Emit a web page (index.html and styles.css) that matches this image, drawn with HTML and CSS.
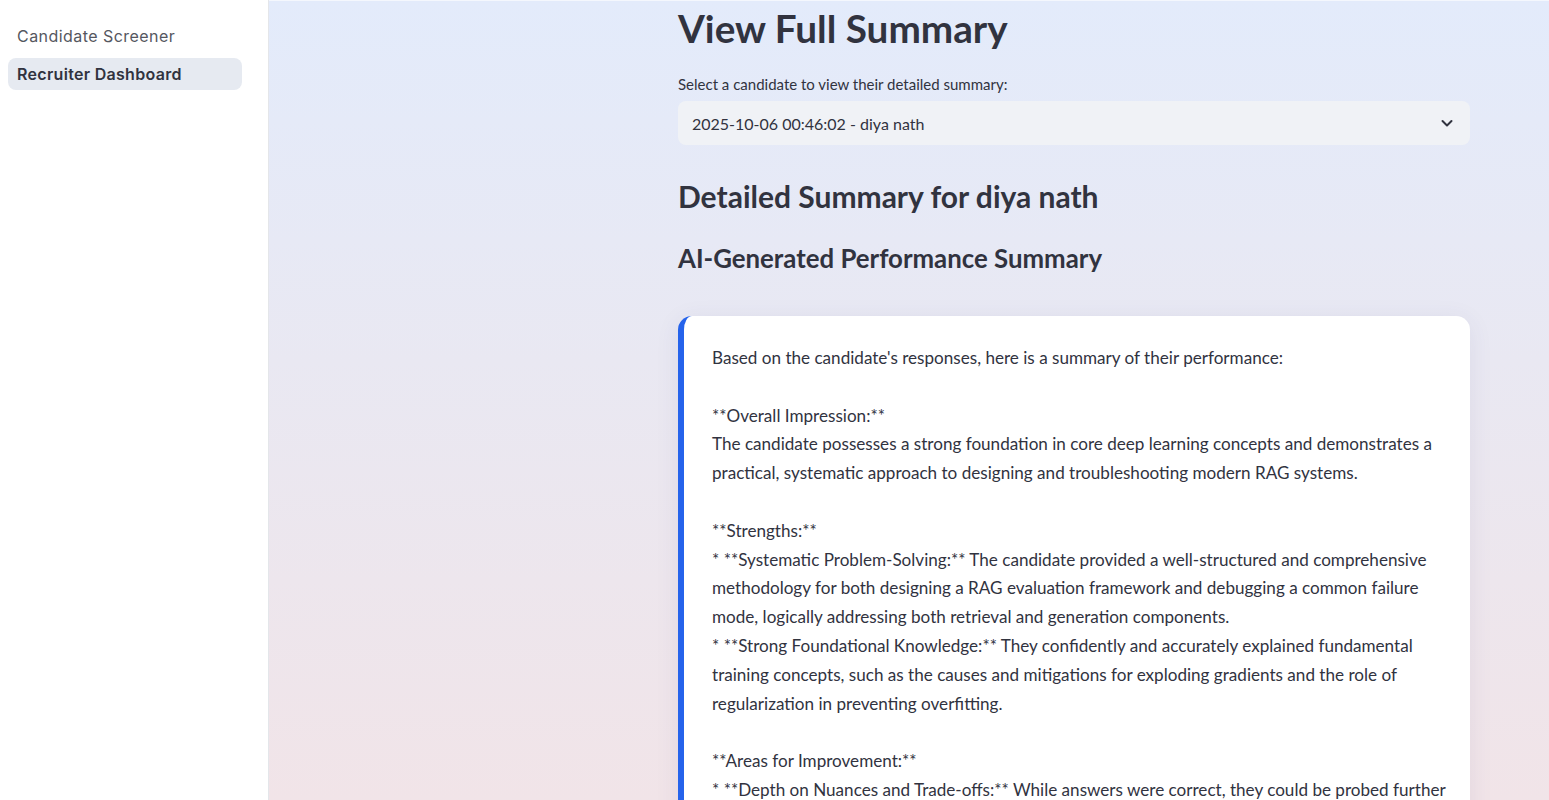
FILE: index.html
```html
<!DOCTYPE html>
<html lang="en">
<head>
<meta charset="utf-8">
<title>Recruiter Dashboard</title>
<link rel="stylesheet" href="styles.css">
</head>
<body>
<div class="app">
  <aside class="sidebar">
    <nav class="nav">
      <a class="nav-item">Candidate Screener</a>
      <a class="nav-item active">Recruiter Dashboard</a>
    </nav>
  </aside>
  <main class="main">
    <div class="columns">
      <div class="col-spacer"></div>
      <div class="col-content">
        <h1 class="title">View Full Summary</h1>
        <label class="field-label">Select a candidate to view their detailed summary:</label>
        <div class="select">
          <span class="select-value">2025-10-06 00:46:02 - diya nath</span>
          <svg class="chevron" width="14" height="14" viewBox="0 0 14 14"><path d="M2.5 5 L7 9.5 L11.5 5" fill="none" stroke="#31333f" stroke-width="2" stroke-linecap="round" stroke-linejoin="round"/></svg>
        </div>
        <h2 class="subtitle">Detailed Summary for diya nath</h2>
        <h3 class="section-title">AI-Generated Performance Summary</h3>
        <div class="summary-card"><p class="summary-text">Based on the candidate's responses, here is a summary of their performance:

**Overall Impression:**
The candidate possesses a strong foundation in core deep learning concepts and demonstrates a practical, systematic approach to designing and troubleshooting modern RAG systems.

**Strengths:**
* **Systematic Problem-Solving:** The candidate provided a well-structured and comprehensive methodology for both designing a RAG evaluation framework and debugging a common failure mode, logically addressing both retrieval and generation components.
* **Strong Foundational Knowledge:** They confidently and accurately explained fundamental training concepts, such as the causes and mitigations for exploding gradients and the role of regularization in preventing overfitting.

**Areas for Improvement:**
* **Depth on Nuances and Trade-offs:** While answers were correct, they could be probed further</p></div>
      </div>
    </div>
  </main>
</div>
</body>
</html>
```
FILE: styles.css
```css
* { box-sizing: border-box; }
html, body { margin: 0; padding: 0; height: 100%; }
body {
  font-family: "Lato", "Open Sans", sans-serif;
  color: #31333f;
  background: #ffffff;
}
.app {
  display: flex;
  height: 100vh;
  overflow: hidden;
}
.sidebar {
  width: 269px;
  flex: 0 0 269px;
  background: #ffffff;
  border-right: 1px solid #e4e6ea;
  padding: 20px 26px 0 8px;
}
.nav {
  display: flex;
  flex-direction: column;
  gap: 6px;
}
.nav-item {
  display: block;
  height: 32px;
  line-height: 32px;
  padding: 0 9px;
  border-radius: 8px;
  font-family: "Inter", "Noto Sans", sans-serif;
  font-size: 16px;
  color: #55575f;
  letter-spacing: 0.45px;
}
.nav-item.active {
  background: #e6eaf1;
  color: #31333f;
  font-weight: 600;
  letter-spacing: 0.3px;
}
.main {
  flex: 1;
  background: linear-gradient(180deg, #e3ebfb 0%, #e9e8f2 45%, #f1e4e8 100%);
  padding: 0 79px 0 80px;
  overflow: hidden;
  border-top: 1px solid #f4f7fd;
}
.columns {
  display: grid;
  grid-template-columns: 1fr 792px;
  column-gap: 16px;
}
.title {
  margin: 0;
  padding-top: 4px;
  font-size: 38.7px;
  line-height: 46px;
  font-weight: 700;
  color: #31333f;
}
.field-label {
  display: block;
  margin-top: 23px;
  font-size: 15px;
  line-height: 20px;
}
.select {
  margin-top: 7px;
  height: 44px;
  background: #f0f2f6;
  border-radius: 8px;
  display: flex;
  align-items: center;
  justify-content: space-between;
  padding: 0 16px 0 14px;
}
.select-value { font-size: 16px; }
.chevron { display: block; }
.subtitle {
  margin: 31px 0 0;
  font-size: 30px;
  line-height: 40px;
  font-weight: 700;
}
.section-title {
  margin: 25px 0 0;
  font-size: 25.8px;
  line-height: 34px;
  font-weight: 700;
}
.summary-card {
  margin-top: 41px;
  background: #ffffff;
  border-left: 6px solid #2563eb;
  border-radius: 14px;
  box-shadow: 0 4px 24px rgba(60, 64, 110, 0.08);
  padding: 28px 16px 40px 28px;
}
.summary-text {
  margin: 0;
  white-space: pre-wrap;
  font-size: 17.1px;
  line-height: 28.8px;
}
```
